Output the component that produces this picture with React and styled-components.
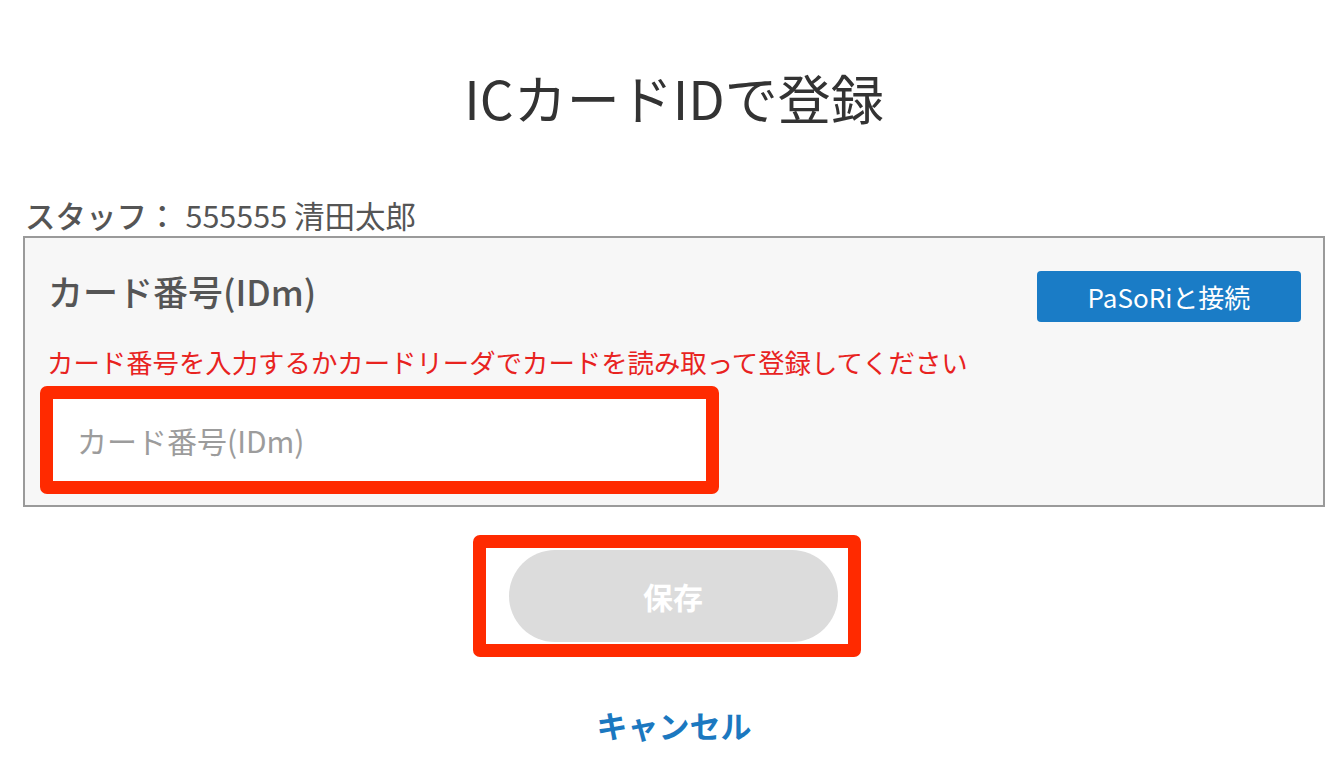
import React from "react";
import styled, { createGlobalStyle } from "styled-components";

const Global = createGlobalStyle`
  html, body { margin: 0; padding: 0; background: #ffffff; }
  body { font-family: "Noto Sans CJK JP", "Noto Sans", sans-serif; }
  * { box-sizing: border-box; }
`;

const Page = styled.div`
  width: 1344px;
  height: 784px;
  padding: 0 19px 0 23px;
  display: flex;
  flex-direction: column;
  overflow: hidden;
`;

const Title = styled.h1`
  margin: 63px 0 0;
  height: 68px;
  line-height: 68px;
  text-align: center;
  font-size: 53px;
  font-weight: 400;
  color: #333333;
  letter-spacing: 0;
`;

const StaffRow = styled.div`
  margin-top: 64px;
  margin-left: 2px;
  height: 40px;
  line-height: 40px;
  font-size: 30.5px;
  color: #555555;
  display: flex;
  align-items: center;
`;

const StaffLabel = styled.span`
  font-weight: 500;
  margin-right: 8px;
`;

const StaffValue = styled.span`
  font-weight: 400;
`;

const Panel = styled.div`
  margin-top: 1px;
  border: 2px solid #9a9a9a;
  background: #f7f7f7;
  height: 271px;
  padding: 33px 22px 0 15px;
  display: flex;
  flex-direction: column;
`;

const PanelHead = styled.div`
  display: flex;
  justify-content: space-between;
  align-items: flex-start;
`;

const FieldLabel = styled.div`
  font-size: 35px;
  font-weight: 500;
  color: #555555;
  line-height: 42px;
  margin-top: -1px;
  margin-left: 8px;
`;

const BlueButton = styled.button`
  width: 264px;
  height: 51px;
  border: none;
  border-radius: 4px;
  background: #1a7cc6;
  color: #ffffff;
  font-family: inherit;
  font-size: 26px;
  font-weight: 400;
  padding: 0;
`;

const ErrorText = styled.div`
  margin-top: 22px;
  margin-left: 7px;
  font-size: 26.4px;
  line-height: 36px;
  color: #e8231f;
`;

const Highlight = styled.div`
  border: ${(p) => p.$w}px solid #ff2a00;
  border-radius: 7px;
  width: ${(p) => p.$width}px;
  height: ${(p) => p.$height}px;
  display: flex;
  align-items: center;
  justify-content: center;
  background: #ffffff;
`;

const InputHighlight = styled(Highlight)`
  margin-top: 6px;
`;

const CardInput = styled.input`
  width: 100%;
  height: 100%;
  border: none;
  outline: none;
  background: #ffffff;
  padding: 0 0 0 24px;
  font-family: inherit;
  font-size: 30px;
  color: #333;
  &::placeholder { color: #9c9c9c; }
`;

const Actions = styled.div`
  display: flex;
  flex-direction: column;
  align-items: center;
  margin-top: 28px;
`;

const SaveHighlight = styled(Highlight)`
  margin-left: -14px;
  padding: 0;
`;

const SaveButton = styled.button`
  width: 329px;
  height: 92px;
  border: none;
  border-radius: 46px;
  background: #dcdcdc;
  color: #ffffff;
  font-family: inherit;
  font-size: 30px;
  font-weight: 700;
  margin-left: 12px;
`;

const CancelLink = styled.a`
  margin-top: 48px;
  margin-left: 0;
  font-size: 31px;
  font-weight: 700;
  color: #1b78c0;
  line-height: 40px;
  text-decoration: none;
`;

export default function App() {
  return (
    <>
      <Global />
      <Page>
        <Title>ICカードIDで登録</Title>
        <StaffRow>
          <StaffLabel>スタッフ：</StaffLabel>
          <StaffValue>555555 清田太郎</StaffValue>
        </StaffRow>
        <Panel>
          <PanelHead>
            <FieldLabel>カード番号(IDm)</FieldLabel>
            <BlueButton>PaSoRiと接続</BlueButton>
          </PanelHead>
          <ErrorText>カード番号を入力するかカードリーダでカードを読み取って登録してください</ErrorText>
          <InputHighlight $w={13} $width={679} $height={108}>
            <CardInput placeholder="カード番号(IDm)" />
          </InputHighlight>
        </Panel>
        <Actions>
          <SaveHighlight $w={13} $width={388} $height={122}>
            <SaveButton>保存</SaveButton>
          </SaveHighlight>
          <CancelLink>キャンセル</CancelLink>
        </Actions>
      </Page>
    </>
  );
}
